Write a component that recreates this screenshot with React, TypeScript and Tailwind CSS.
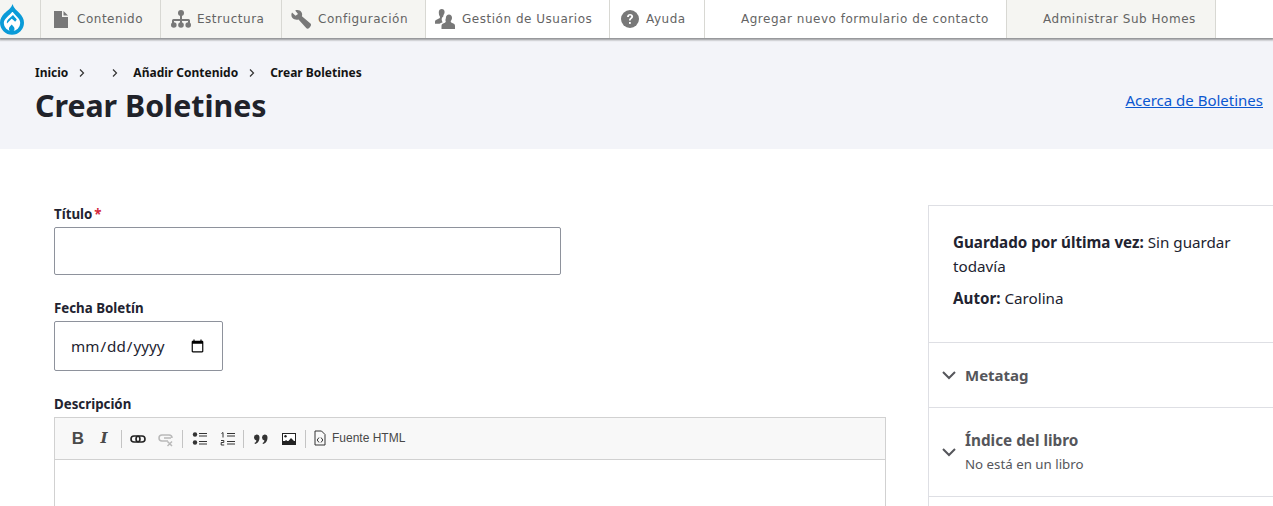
import { ReactNode } from "react"

const body = "font-['Noto_Sans',sans-serif]"

const DrupalLogo = () => (
  <svg width="24" height="31" viewBox="0 0 24 31" className="mt-[1px]">
    <path d="M12.500 0c1 4 4.500 6.500 7.300 9.500 2.400 2.500 4.200 5.500 4.200 9.200A12 12 0 0 1 0 18.700c0-3.700 1.800-6.700 4.200-9.200C7.500 6.500 11.500 4 12.500 0z" fill="#0a9bd8" />
    <path d="M12.500 7.500c-1.500 2.300-3.700 3.900-5.500 5.700-1.500 1.600-3.200 3.300-3.200 5.800a8.200 8 0 0 0 16.400 0c0-2.300-1-4-2.500-5.600-1.800-2-3.900-3.700-5.200-5.900z" fill="#fff" />
    <path d="M13 11c1.300 2 3 3 3.800 4.800l-1.700 2c-1.200-1.700-2.500-2.500-3.500-3.100L7 19.500c-.5-1.600.2-3 1.300-4.200z" fill="#0a9bd8" />
    <path d="M11.700 20.500c1 1.500 2.800 2.300 2.800 4.200a2.800 2.800 0 0 1-5.600 0c0-1.900 1.800-2.700 2.800-4.200z" fill="#0a9bd8" />
  </svg>
)

const FileIcon = () => (
  <svg width="14" height="17" viewBox="0 0 14 17" fill="#787878">
    <path d="M0 0h8v6h6v11H0z" />
    <path d="M9.500 0L14 4.500H9.500z" />
  </svg>
)

const TreeIcon = () => (
  <svg width="20" height="18" viewBox="0 0 20 18" fill="#787878">
    <circle cx="10" cy="3" r="3" />
    <path d="M9 5h2v4h6.500a1.500 1.500 0 0 1 1.500 1.500V13h-2v-2h-6v2H9v-2H3v2H1v-2.500A1.500 1.500 0 0 1 2.500 9H9z" />
    <circle cx="2.800" cy="15" r="2.800" />
    <circle cx="10" cy="15" r="2.800" />
    <circle cx="17.200" cy="15" r="2.800" />
  </svg>
)

const WrenchIcon = () => (
  <svg width="20" height="19" viewBox="0 0 20 19" fill="#787878">
    <path d="M1 2.500L4.500 5.800 7 4 4.200 0.600C6.500-.4 9.300.2 10.500 2.200c.8 1.400.8 2.800.4 4L19.500 13.500c.8.800.7 2-.1 3l-1.200 1.400c-.9.900-2.200 1-3 .1L7.500 9.400C5.500 10 3 9.600 1.500 8 .2 6.500 0 4.200 1 2.500z" />
  </svg>
)

const UsersIcon = () => (
  <svg width="20" height="20" viewBox="0 0 20 20" fill="#787878">
    <path d="M6.800 0c1.700 0 2.800 1.300 2.800 3 0 1-.4 2-.9 2.700-.4.600-.5 1.200-.4 1.800-1 .6-1.700 1.700-1.600 3.200.1 1 .5 1.900 1 2.500-1.300.5-2.200 1-3.200 1.600V14.800H0v-2c0-1.600 1-2.100 2.500-2.600 1.200-.4 2.300-1 2.500-1.700.1-.8-.2-1.300-.7-2.100C3.900 5.500 3.800 4 3.800 3 3.900 1.300 5 0 6.800 0z" />
    <path d="M14 5.500c1.800 0 3 1.400 3 3.200 0 1.200-.5 2.400-1.100 3.100-.4.700-.2 1.600.7 2 1.600.7 3.400 1 3.400 3V20H6.500v-3.200c0-2 1.800-2.300 3.400-3 .9-.4 1.100-1.300.7-2C10 11.100 10.900 10 10.900 8.700c0-1.800 1.300-3.200 3.100-3.200z" />
  </svg>
)

const HelpIcon = () => (
  <svg width="18" height="18" viewBox="0 0 18 18">
    <circle cx="9" cy="9" r="9" fill="#787878" />
    <path d="M6 7c0-1.800 1.300-2.900 3.100-2.900 1.800 0 3 1 3 2.500 0 2.300-2.400 2.200-2.400 4H8c0-2.700 2.200-2.700 2.200-4 0-.6-.5-1-1.100-1-.7 0-1.200.5-1.200 1.400z" fill="#fff" />
    <rect x="8" y="12" width="1.800" height="1.900" fill="#fff" />
  </svg>
)

const menu: { label: string; width: string; icon?: ReactNode; bg: string; pad: string; gap: string }[] = [
  { label: "Contenido", width: "w-[120px]", icon: <FileIcon />, bg: "bg-[#f5f5f2]", pad: "pl-[13px]", gap: "gap-[9px]" },
  { label: "Estructura", width: "w-[121px]", icon: <TreeIcon />, bg: "bg-[#f5f5f2]", pad: "pl-[10px]", gap: "gap-[6px]" },
  { label: "Configuración", width: "w-[144px]", icon: <WrenchIcon />, bg: "bg-[#f5f5f2]", pad: "pl-[9px]", gap: "gap-[7px]" },
  { label: "Gestión de Usuarios", width: "w-[184px]", icon: <UsersIcon />, bg: "bg-white", pad: "pl-[9px]", gap: "gap-[7px]" },
  { label: "Ayuda", width: "w-[95px]", icon: <HelpIcon />, bg: "bg-white", pad: "pl-[11px]", gap: "gap-[7px]" },
  { label: "Agregar nuevo formulario de contacto", width: "w-[302px]", bg: "bg-white", pad: "pl-[36px]", gap: "" },
  { label: "Administrar Sub Homes", width: "w-[209px]", bg: "bg-[#f5f5f2]", pad: "pl-[36px]", gap: "" },
]

const Crumb = ({ children }: { children: ReactNode }) => (
  <span className="font-bold text-[#141414]">{children}</span>
)

const Sep = ({ className }: { className: string }) => (
  <svg width="6" height="8" viewBox="0 0 6 8" fill="none" stroke="#333" strokeWidth="1.200" className={className}>
    <path d="M1 .5L4.500 4 1 7.500" />
  </svg>
)

const Chevron = () => (
  <svg width="14" height="9" viewBox="0 0 14 9" fill="none" stroke="#55565b" strokeWidth="2" className="shrink-0">
    <path d="M1 1l6 6 6-6" />
  </svg>
)

const Divider = ({ className }: { className: string }) => <span className={`w-px h-[18px] bg-[#c4c4c4] ${className}`} />

const ToolIcon = ({ children, className = "w-[28px]" }: { children: ReactNode; className?: string }) => (
  <span className={`${className} flex justify-center shrink-0`}>
    <svg width="16" height="16" viewBox="0 0 16 16" className="shrink-0">
      {children}
    </svg>
  </span>
)

export default function App() {
  return (
    <div className={`h-[506px] overflow-hidden bg-white ${body}`}>
      {/* Toolbar */}
      <nav className="flex h-[38px] bg-white relative z-10 shadow-[0_1px_2px_1px_rgba(0,0,0,0.4)] font-['DejaVu_Sans',sans-serif] text-[12px] tracking-[0.52px] text-[#646464]">
        <div className="w-[41px] h-full bg-[#f5f5f2] border-r border-[#d8d8d3] flex items-center overflow-hidden shrink-0">
          <DrupalLogo />
        </div>
        {menu.map((item) => (
          <div
            key={item.label}
            className={`${item.width} ${item.bg} ${item.pad} ${item.gap} h-full border-r border-[#d8d8d3] flex items-center shrink-0 whitespace-nowrap`}
          >
            {item.icon}
            <span>{item.label}</span>
          </div>
        ))}
      </nav>

      {/* Page header */}
      <header className="h-[111px] bg-[#f3f4f9] pl-[35px] pr-[10px] flex justify-between">
        <div>
          <div className="flex items-center h-[20px] mt-[25px] text-[12px] leading-none">
            <Crumb>Inicio</Crumb>
            <Sep className="ml-[11px] mr-[27px]" />
            <Sep className="mr-[15px]" />
            <Crumb>Añadir Contenido</Crumb>
            <Sep className="ml-[11px] mr-[15px]" />
            <Crumb>Crear Boletines</Crumb>
          </div>
          <h1 className="mt-[3px] text-[30.300px] leading-[40px] font-bold text-[#20222a]">Crear Boletines</h1>
        </div>
        <a href="#" className="mt-[50px] h-[24px] text-[15px] leading-[24px] text-[#0b57d0] underline">
          Acerca de Boletines
        </a>
      </header>

      <main className="flex pl-[54px] pt-[56px]">
        {/* Form */}
        <form className="w-[874px] shrink-0">
          <label className="flex h-[20px] items-center text-[13.300px] font-bold text-[#222330]">
            Título<span className="ml-[2px] text-[#d3293d]">*</span>
          </label>
          <input type="text" className="block mt-[2px] w-[507px] h-[48px] bg-white border border-[#8e929c] rounded-[2px]" />

          <label className="flex h-[20px] mt-[24px] items-center text-[13.300px] font-bold text-[#222330]">Fecha Boletín</label>
          <input
            type="date"
            className="block mt-[2px] w-[169px] h-[50px] px-[15px] pt-[1px] bg-white border border-[#8e929c] rounded-[2px] text-[15.200px] text-[#222330]"
          />

          <label className="flex h-[20px] mt-[24px] items-center text-[13.300px] font-bold text-[#222330]">Descripción</label>
          <div className="mt-[2px] w-[832px] border border-[#d1d1d1]">
            <div className="h-[42px] bg-[#f8f8f8] border-b border-[#d1d1d1] flex items-center pl-[10px]">
              <span className="w-[26px] text-center font-['Liberation_Sans',sans-serif] font-bold text-[17px] leading-none text-[#4a4a4a]">B</span>
              <span className="w-[26px] text-center font-['DejaVu_Serif',serif] font-bold italic text-[15px] leading-none text-[#4a4a4a]">I</span>
              <Divider className="ml-[4px] mr-[2px]" />
              <ToolIcon>
                <g fill="none" stroke="#222" strokeWidth="1.600">
                  <rect x="1" y="5" width="9" height="6" rx="3" />
                  <rect x="6" y="5" width="9" height="6" rx="3" />
                </g>
              </ToolIcon>
              <ToolIcon>
                <g fill="none" stroke="#b9b9b9" strokeWidth="1.500">
                  <path d="M10 10H4a2.800 2.800 0 0 1 0-6h7a3 3 0 0 1 3 3" />
                  <path d="M6 7h7" />
                  <path d="M9.500 10.500l4.500 4.500M14 10.500l-4.500 4.500" />
                </g>
              </ToolIcon>
              <Divider className="ml-[2px] mr-[3px]" />
              <ToolIcon>
                <circle cx="3" cy="3.500" r="2.200" fill="#333" />
                <circle cx="3" cy="11.500" r="2.200" fill="#333" />
                <path d="M7 2.500h8M7 5h8M7 10.500h8M7 13h8" stroke="#333" />
              </ToolIcon>
              <ToolIcon className="w-[28px]">
                <path d="M1.500 2.500l1.500-1v5M1 9.500h2.800v2H1.200v2.500h3M7 2.500h8M7 5h8M7 10.500h8M7 13h8" stroke="#333" fill="none" />
              </ToolIcon>
              <Divider className="ml-[1px] mr-[3px]" />
              <ToolIcon>
                <path d="M3.500 3.500a3 3 0 0 1 3 3c0 3.500-2 6-4.500 6.500l-.5-1c1-.5 1.700-1.300 1.900-2.600A3 3 0 0 1 3.500 3.500zM11.500 3.500a3 3 0 0 1 3 3c0 3.500-2 6-4.500 6.500l-.5-1c1-.5 1.700-1.300 1.900-2.600A3 3 0 0 1 11.500 3.500z" fill="#333" />
              </ToolIcon>
              <ToolIcon>
                <rect x="1" y="2" width="14" height="12" fill="#222" />
                <rect x="2" y="3" width="12" height="7" fill="#fff" />
                <circle cx="4.500" cy="5.200" r="1.200" fill="#222" />
                <path d="M2 12l3-3 2 1.500 3-3.500 4 4v2H2z" fill="#222" />
              </ToolIcon>
              <Divider className="ml-[2px] mr-[8px]" />
              <span className="flex items-center gap-[6px] -mt-[2px] font-['Liberation_Sans',sans-serif] text-[12px] text-[#484848]">
                <ToolIcon className="w-[12px]">
                  <path d="M3 1h6.500L13 4.500V15H3z" fill="none" stroke="#333" />
                  <path d="M7 7.500L5.200 10 7 12.500M9 7.500l1.800 2.500L9 12.500" fill="none" stroke="#333" />
                </ToolIcon>
                Fuente HTML
              </span>
            </div>
            <div className="h-[200px] bg-white" />
          </div>
        </form>

        {/* Sidebar */}
        <aside className="flex-1 min-w-0">
          <div className="border border-r-0 border-[#dedfe4] text-[#222330]">
            <div className="px-[24px] pt-[24px] h-[137px] border-b border-[#dedfe4] text-[15.200px] leading-[24px]">
              <p>
                <strong>Guardado por última vez:</strong> Sin guardar todavía
              </p>
              <p className="mt-[8px]">
                <strong>Autor:</strong> Carolina
              </p>
            </div>
            <div className="h-[65px] border-b border-[#dedfe4] flex items-center pl-[13px] gap-[9px]">
              <Chevron />
              <span className="text-[15px] font-bold text-[#55565b]">Metatag</span>
            </div>
            <div className="h-[89px] border-b border-[#dedfe4] flex items-center pl-[13px] gap-[9px]">
              <Chevron />
              <div>
                <div className="text-[15.300px] leading-[20px] font-bold text-[#55565b]">Índice del libro</div>
                <div className="text-[13.300px] leading-[20px] text-[#55565b] mt-[4px]">No está en un libro</div>
              </div>
            </div>
            <div className="h-[60px]" />
          </div>
        </aside>
      </main>
    </div>
  )
}
